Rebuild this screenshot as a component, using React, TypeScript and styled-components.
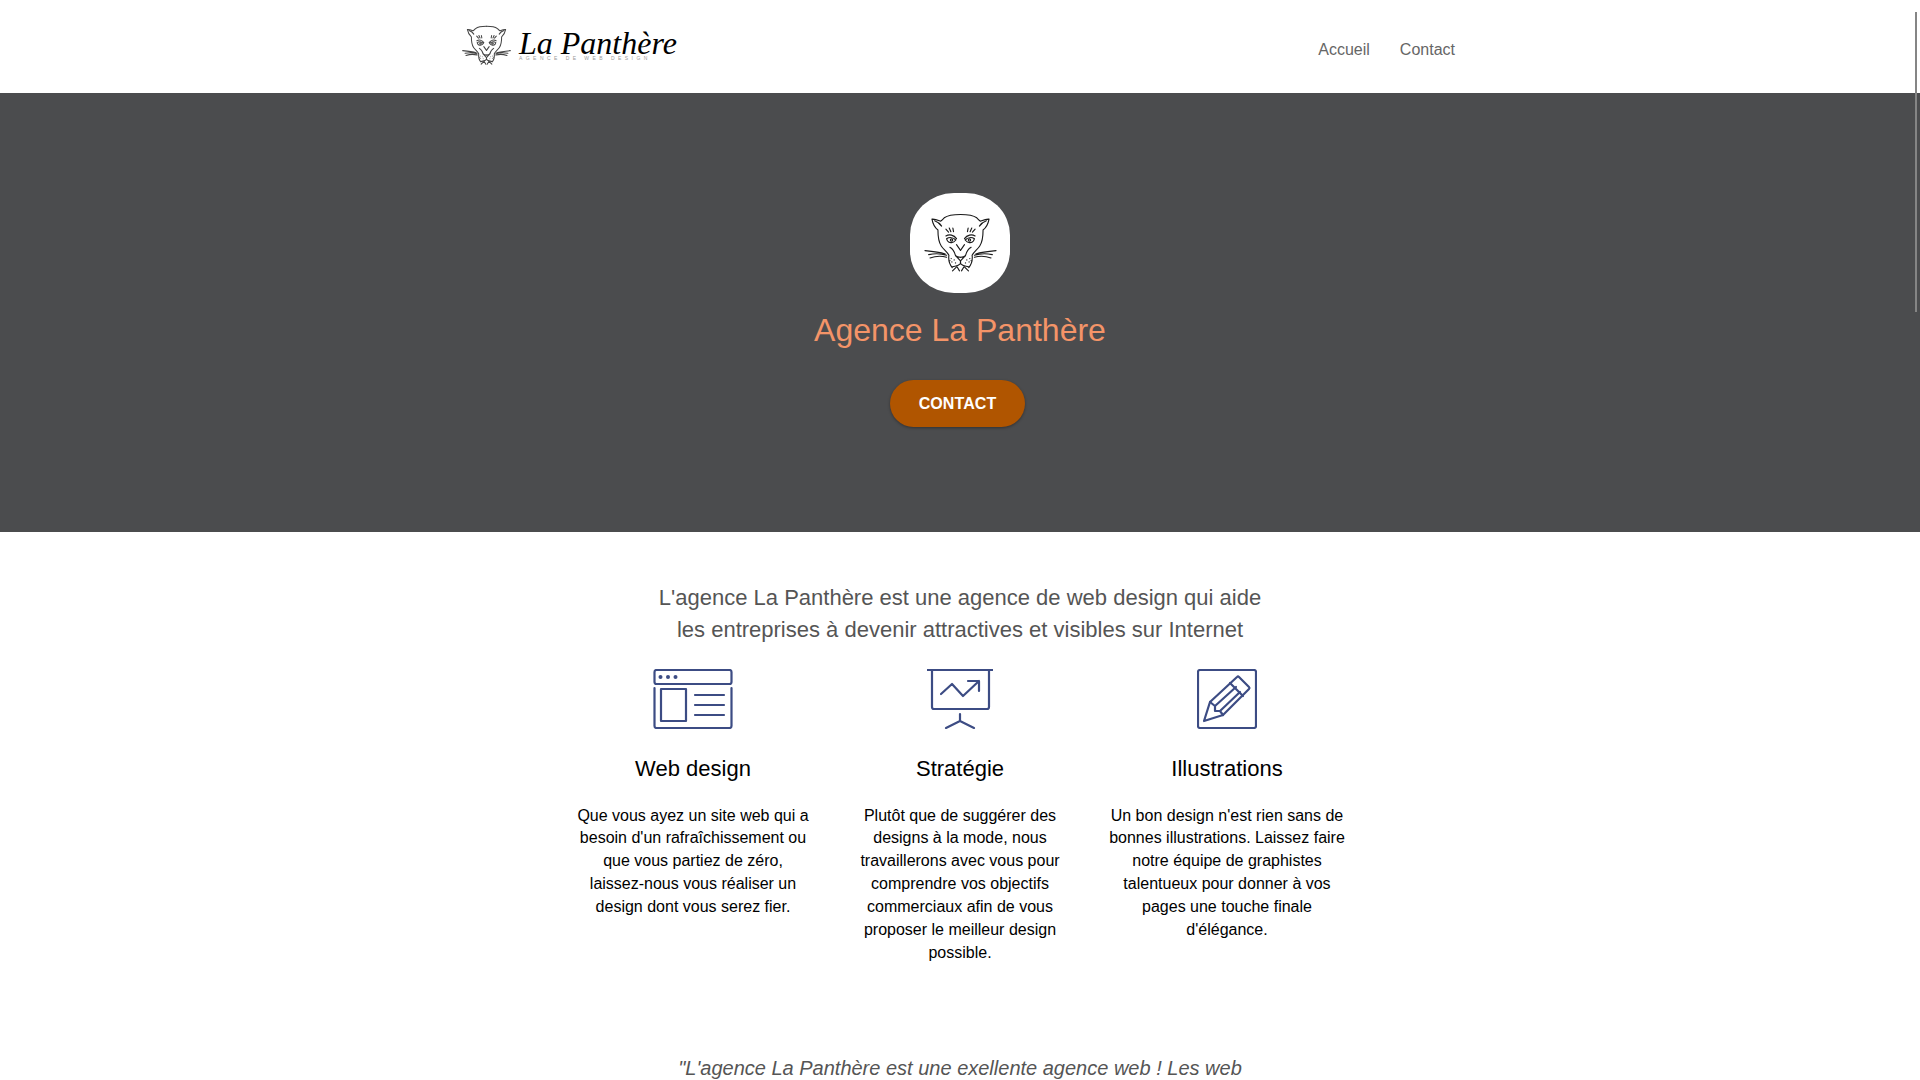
import React from 'react';
import styled, { createGlobalStyle } from 'styled-components';

const GlobalStyle = createGlobalStyle`
    html, body {
        margin: 0;
        height: 100%;
        overflow: hidden;
        background: #fff;
        font-family: "Liberation Sans", Arial, sans-serif;
    }
`;

const Page = styled.div`
    position: relative;
    height: 1080px;
    overflow: hidden;
`;

const ScrollThumb = styled.div`
    position: absolute;
    top: 12px;
    right: 3px;
    width: 2px;
    height: 300px;
    background: #858585;
`;

const Header = styled.header`
    height: 93px;
    display: flex;
    justify-content: center;
`;

const HeaderInner = styled.div`
    width: 1000px;
    display: flex;
    justify-content: space-between;
    align-items: center;
    padding: 0 5px 0 2px;
    box-sizing: border-box;
`;

const Brand = styled.a`
    display: flex;
    align-items: center;
    gap: 8px;
    margin-top: -2px;
    color: #000;
    svg {
        width: 49px;
        height: 41px;
    }
`;

const BrandText = styled.div`
    display: flex;
    flex-direction: column;
    margin-top: -5px;
`;

const BrandName = styled.span`
    font-family: "Liberation Serif", serif;
    font-style: italic;
    font-size: 32px;
    line-height: 36px;
`;

const BrandTag = styled.span`
    font-size: 5px;
    line-height: 6px;
    margin-top: -6px;
    letter-spacing: 3.45px;
    color: #9a9a9a;
    white-space: nowrap;
`;

const Nav = styled.nav`
    display: flex;
    gap: 30px;
    margin-top: 6px;
`;

const NavLink = styled.a`
    font-size: 16px;
    color: #666;
`;

const Hero = styled.section`
    height: 439px;
    background: #4b4c4e;
    display: flex;
    flex-direction: column;
    align-items: center;
    padding-top: 100px;
    box-sizing: border-box;
`;

const Badge = styled.div`
    width: 100px;
    height: 100px;
    background: #fff;
    border-radius: 44% / 42%;
    display: flex;
    align-items: center;
    justify-content: center;
    svg {
        width: 73px;
        height: 60px;
    }
`;

const HeroTitle = styled.h1`
    margin: 17px 0 0;
    font-size: 32px;
    line-height: 40px;
    font-weight: 400;
    color: #f49468;
`;

const HeroButton = styled.a`
    margin: 30px 5px 0 0;
    width: 135px;
    height: 47px;
    border-radius: 24px;
    background: #b05500;
    box-shadow: 0 1px 3px rgba(0, 0, 0, 0.35);
    color: #fff;
    font-size: 16px;
    font-weight: 700;
    letter-spacing: 0.1px;
    display: flex;
    align-items: center;
    justify-content: center;
`;

const Intro = styled.p`
    margin: 50px 0 0;
    text-align: center;
    font-size: 22px;
    line-height: 32px;
    color: #555;
`;

const Services = styled.div`
    margin-top: 23px;
    display: flex;
    justify-content: center;
`;

const Service = styled.div`
    width: 267px;
    display: flex;
    flex-direction: column;
    align-items: center;
    text-align: center;
`;

const ServiceIcon = styled.svg`
    height: 60px;
    display: block;
    fill: none;
    stroke: #3c4c84;
    stroke-width: 2.2;
    stroke-linecap: round;
    stroke-linejoin: round;
`;

const ServiceTitle = styled.h2`
    margin: 25px 0 0;
    font-size: 22px;
    line-height: 30px;
    font-weight: 400;
    color: #000;
`;

const ServiceText = styled.p`
    margin: 20.5px 0 0;
    width: 238px;
    font-size: 16px;
    line-height: 22.9px;
    color: #000;
`;

const Quote = styled.p`
    margin: 87.5px 0 0;
    text-align: center;
    font-size: 20px;
    line-height: 32px;
    font-style: italic;
    color: #555;
`;

const PantherHalf = () => (
    <>
        <path d="M300 133C280 133 262 135 251 143C246 148 243 152 240 153C232 150 222 146 214 147C216 158 222 172 232 180C232 195 233 215 242 228C250 240 260 245 265 256C263 272 268 285 275 293" />
        <path d="M222 152C230 155 238 160 243 168" />
        <path d="M256 177L264 186M266 174L271 185M277 174L279 185" />
        <path d="M256 198C266 192 280 194 288 206M258 206C266 201 278 202 286 210C279 219 267 221 261 213Z" />
        <circle cx="273" cy="210" r="3.5" />
        <path d="M288 224L300 241M268 232C276 236 282 246 285 257" />
        <path d="M300 262C294 262 288 260 285 257L300 273V281C292 290 284 288 276 291" />
        <path d="M276 303L289 290L297 303" />
        <path d="M193 242C215 244 235 246 254 252M204 254C222 250 240 250 258 256M208 264C225 258 245 258 258 262" />
        <g fill="#222" stroke="none">
            <circle cx="272" cy="266" r="2" />
            <circle cx="281" cy="270" r="2" />
            <circle cx="274" cy="276" r="2" />
            <circle cx="285" cy="279" r="2" />
            <circle cx="268" cy="272" r="2" />
        </g>
    </>
);

const Panther = ({ weight = 3.4, color = '#1a1a1a' }: { weight?: number; color?: string }) => (
    <svg viewBox="190 130 220 178" fill="none" stroke={color} strokeWidth={weight} strokeLinecap="round" strokeLinejoin="round">
        <PantherHalf />
        <g transform="translate(600 0) scale(-1 1)">
            <PantherHalf />
        </g>
    </svg>
);

export default function App() {
    return (
        <Page>
            <GlobalStyle />
            <Header>
                <HeaderInner>
                    <Brand>
                        <Panther weight={4.6} color="#444" />
                        <BrandText>
                            <BrandName>La Panthère</BrandName>
                            <BrandTag>AGENCE DE WEB DESIGN</BrandTag>
                        </BrandText>
                    </Brand>
                    <Nav>
                        <NavLink>Accueil</NavLink>
                        <NavLink>Contact</NavLink>
                    </Nav>
                </HeaderInner>
            </Header>
            <Hero>
                <Badge>
                    <Panther />
                </Badge>
                <HeroTitle>Agence La Panthère</HeroTitle>
                <HeroButton>CONTACT</HeroButton>
            </Hero>
            <Intro>
                L'agence La Panthère est une agence de web design qui aide<br />
                les entreprises à devenir attractives et visibles sur Internet
            </Intro>
            <Services>
                <Service>
                    <ServiceIcon viewBox="0 0 80 60" width="80">
                        <rect x="1.5" y="1" width="77" height="14" rx="2" />
                        <path d="M1.5 19V57Q1.5 59 3.5 59H76.5Q78.5 59 78.5 57V19" />
                        <rect x="8" y="20" width="25" height="32" />
                        <path d="M42 26H71M42 36H71M42 46H71" />
                        <g fill="#3c4c84" stroke="none">
                            <circle cx="7.5" cy="8" r="2" />
                            <circle cx="15" cy="8" r="2" />
                            <circle cx="22.5" cy="8" r="2" />
                        </g>
                    </ServiceIcon>
                    <ServiceTitle>Web design</ServiceTitle>
                    <ServiceText>
                        Que vous ayez un site web qui a besoin d'un rafraîchissement ou que vous partiez de zéro, laissez-nous vous réaliser un design dont vous serez fier.
                    </ServiceText>
                </Service>
                <Service>
                    <ServiceIcon viewBox="0 0 66 60" width="66">
                        <path d="M0 1H66M5 1V38Q5 40 7 40H60Q62 40 62 38V1" />
                        <path d="M14 25L25 15L36 27L52 12M41 12H52V22" />
                        <path d="M33 45V52M33 52L19 59M33 52L47 59" />
                    </ServiceIcon>
                    <ServiceTitle>Stratégie</ServiceTitle>
                    <ServiceText>
                        Plutôt que de suggérer des designs à la mode, nous travaillerons avec vous pour comprendre vos objectifs commerciaux afin de vous proposer le meilleur design possible.
                    </ServiceText>
                </Service>
                <Service>
                    <ServiceIcon viewBox="0 0 60 60" width="60">
                        <rect x="1" y="1" width="58" height="58" rx="2" />
                        <path d="M7 52L13 33L40 8Q41 7 42 8L52 18Q53 19 52 20L26 46Z" />
                        <path d="M33 14L46 27M13 33L18 37V42L23 42L26 46M18 37L39 18M23 42L43 23" />
                    </ServiceIcon>
                    <ServiceTitle>Illustrations</ServiceTitle>
                    <ServiceText>
                        Un bon design n'est rien sans de bonnes illustrations. Laissez faire notre équipe de graphistes talentueux pour donner à vos pages une touche finale d'élégance.
                    </ServiceText>
                </Service>
            </Services>
            <Quote>"L'agence La Panthère est une exellente agence web ! Les web</Quote>
            <ScrollThumb />
        </Page>
    );
}
